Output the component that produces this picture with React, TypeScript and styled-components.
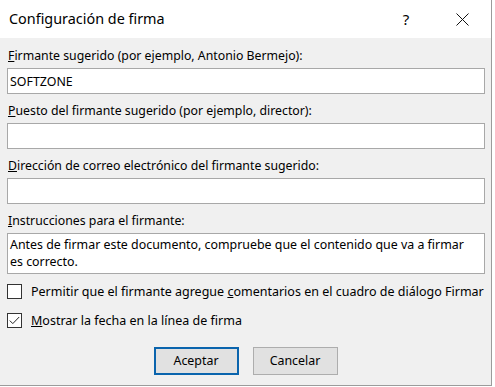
import React from 'react';
import styled, { createGlobalStyle } from 'styled-components';

const Global = createGlobalStyle`
  html, body { margin: 0; padding: 0; background: #ffffff; }
  body { font-family: "Noto Sans", "Open Sans", sans-serif; color: #000; }
  * { box-sizing: border-box; }
`;

const Page = styled.div`
  display: flex;
  width: 495px;
  height: 387px;
`;

const Dialog = styled.div`
  width: 492px;
  height: 386px;
  border-right: 1px solid #9b9b9b;
  border-bottom: 1px solid #9b9b9b;
  display: flex;
  flex-direction: column;
  background: #f0f0f0;
`;

const TitleBar = styled.div`
  height: 38px;
  background: #ffffff;
  display: flex;
  align-items: center;
  padding-left: 9px;
`;

const Title = styled.div`
  flex: 1;
  font-size: 14.4px;
  line-height: 20px;
  padding-bottom: 1px;
`;

const HelpButton = styled.div`
  width: 46px;
  text-align: center;
  font-size: 15px;
  line-height: 20px;
  margin-right: 10px;
  padding-bottom: 1px;
`;

const CloseButton = styled.div`
  width: 46px;
  height: 38px;
  display: flex;
  align-items: center;
  justify-content: center;
  margin-right: 6px;
`;

const Body = styled.div`
  display: flex;
  flex-direction: column;
  padding: 10px 6px 0 7px;
`;

const Field = styled.div<{ $last?: boolean }>`
  display: flex;
  flex-direction: column;
  gap: 4px;
  margin-bottom: ${p => (p.$last ? '10px' : '9px')};
`;

const Label = styled.div`
  font-size: 12.3px;
  line-height: 16px;
  padding-left: 1px;
`;

const Key = styled.span`
  text-decoration: underline;
  text-underline-offset: 1px;
`;

const TextBox = styled.div<{ $height: number }>`
  height: ${p => p.$height}px;
  border: 1px solid #a8a8a8;
  background: #ffffff;
  font-size: 12.4px;
  line-height: 17px;
  padding: ${p => (p.$height > 30 ? '2px 2px 0' : '4px 2px 0')};
  white-space: nowrap;
`;

const CheckRow = styled.div<{ $gap: number }>`
  display: flex;
  align-items: center;
  gap: 9px;
  height: 15px;
  margin-bottom: ${p => p.$gap}px;
  font-size: 12.5px;
  line-height: 16px;
`;

const Box = styled.div`
  width: 15px;
  height: 15px;
  border: 1px solid #333333;
  background: #ffffff;
  display: flex;
  align-items: center;
  justify-content: center;
  flex: none;
`;

const Footer = styled.div`
  display: flex;
  justify-content: center;
  gap: 14px;
  padding-right: 1px;
`;

const Button = styled.div<{ $primary?: boolean }>`
  width: 85px;
  height: 28px;
  background: #e1e1e1;
  border: ${p => (p.$primary ? '2px solid #0a64ad' : '1px solid #adadad')};
  display: flex;
  align-items: center;
  justify-content: center;
  font-size: 12.4px;
  line-height: 16px;
`;

export default function App() {
  return (
    <Page>
      <Global />
      <Dialog>
        <TitleBar>
          <Title>Configuración de firma</Title>
          <HelpButton>?</HelpButton>
          <CloseButton>
            <svg width="13" height="13" viewBox="0 0 13 13">
              <path d="M0.5 0.5 L12.5 12.5 M12.5 0.5 L0.5 12.5" stroke="#111" strokeWidth="1" fill="none" />
            </svg>
          </CloseButton>
        </TitleBar>
        <Body>
          <Field>
            <Label><Key>F</Key>irmante sugerido (por ejemplo, Antonio Bermejo):</Label>
            <TextBox $height={26}>SOFTZONE</TextBox>
          </Field>
          <Field>
            <Label><Key>P</Key>uesto del firmante sugerido (por ejemplo, director):</Label>
            <TextBox $height={26} />
          </Field>
          <Field>
            <Label><Key>D</Key>irección de correo electrónico del firmante sugerido:</Label>
            <TextBox $height={26} />
          </Field>
          <Field $last>
            <Label><Key>I</Key>nstrucciones para el firmante:</Label>
            <TextBox $height={41}>
              Antes de firmar este documento, compruebe que el contenido que va a firmar
              <br />
              es correcto.
            </TextBox>
          </Field>
          <CheckRow $gap={14}>
            <Box />
            <span>Permitir que el firmante agregue <Key>c</Key>omentarios en el cuadro de diálogo Firmar</span>
          </CheckRow>
          <CheckRow $gap={19}>
            <Box>
              <svg width="11" height="9" viewBox="0 0 11 9">
                <path d="M0.8 4.6 L3.8 7.6 L10.2 1" stroke="#222" strokeWidth="1" fill="none" />
              </svg>
            </Box>
            <span><Key>M</Key>ostrar la fecha en la línea de firma</span>
          </CheckRow>
          <Footer>
            <Button $primary>Aceptar</Button>
            <Button>Cancelar</Button>
          </Footer>
        </Body>
      </Dialog>
    </Page>
  );
}
